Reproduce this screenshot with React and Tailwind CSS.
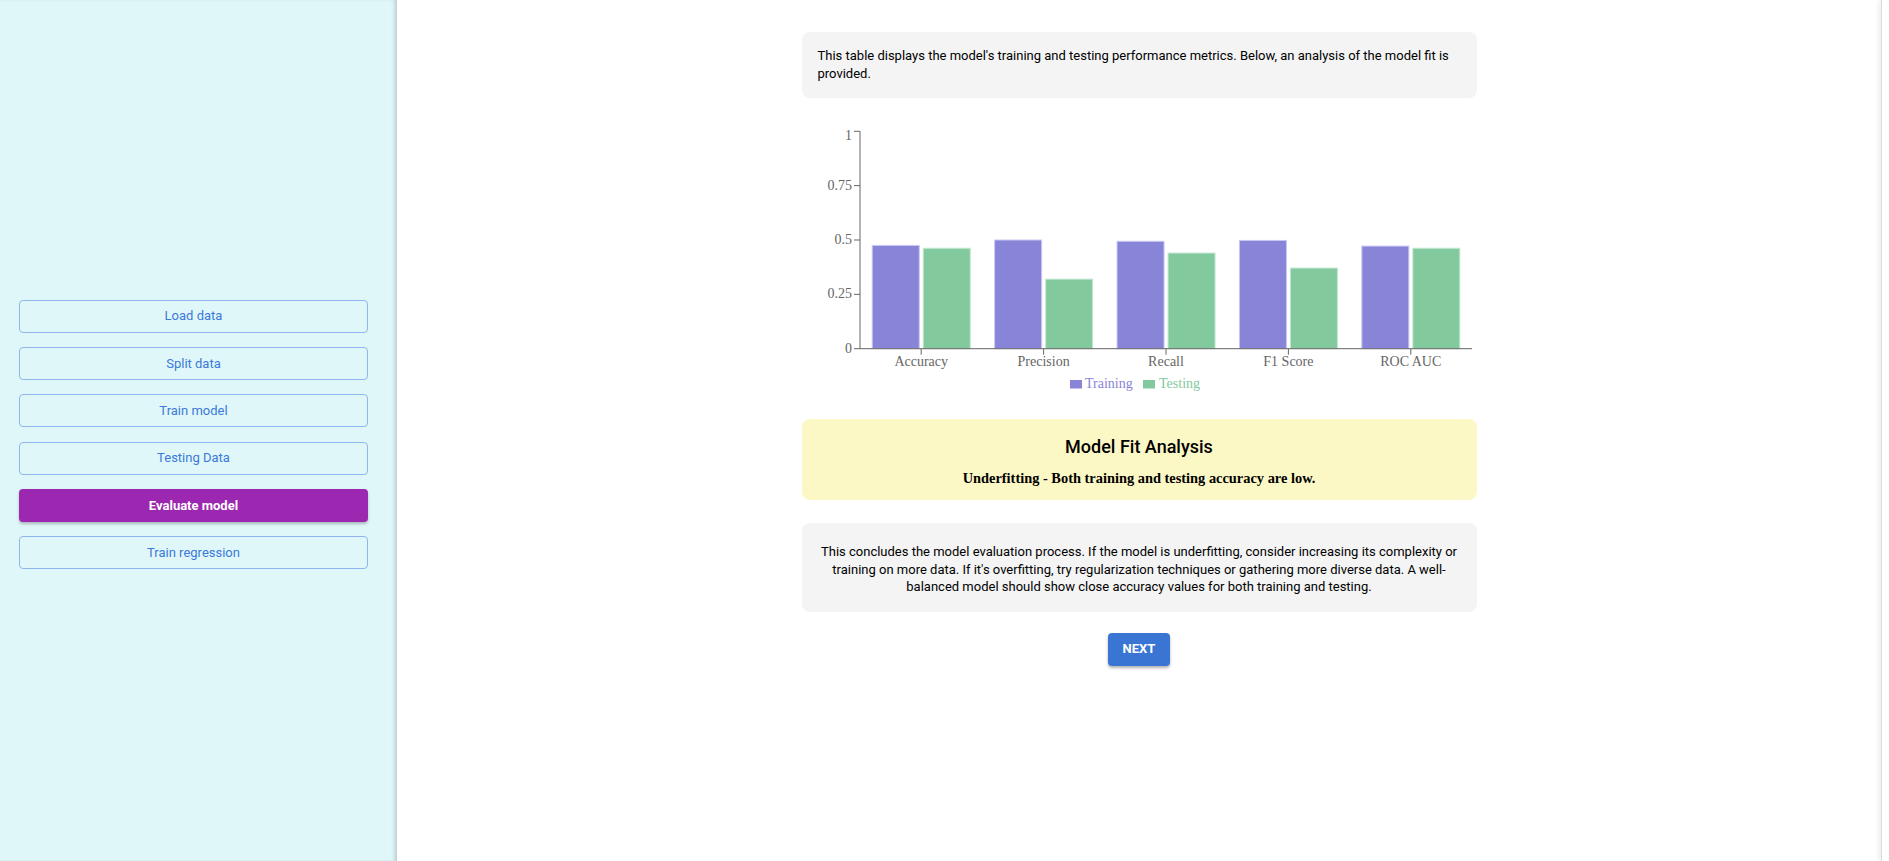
import React from 'react';

const steps = [
  { label: 'Load data' },
  { label: 'Split data' },
  { label: 'Train model' },
  { label: 'Testing Data' },
  { label: 'Evaluate model', active: true },
  { label: 'Train regression' },
];

const metrics = [
  { name: 'Accuracy', train: 0.475, test: 0.462 },
  { name: 'Precision', train: 0.5, test: 0.32 },
  { name: 'Recall', train: 0.494, test: 0.44 },
  { name: 'F1 Score', train: 0.498, test: 0.371 },
  { name: 'ROC AUC', train: 0.472, test: 0.462 },
];

// chart geometry (svg coords)
const AXIS_X = 58;
const AXIS_END = 670;
const Y_TOP = 20.3;
const Y_ZERO = 237.7;
const CAT_W = (AXIS_END - AXIS_X) / metrics.length;
const BAR_W = 47;
const yOf = (v) => Y_ZERO - v * (Y_ZERO - Y_TOP);

function MetricsChart() {
  const serif = { fontFamily: '"Liberation Serif", "Times New Roman", serif' };
  return (
    <svg width="675" height="290" className="block mt-[13px]" style={serif}>
      {/* bars */}
      {metrics.map((m, i) => {
        const start = AXIS_X + i * CAT_W;
        return (
          <g key={m.name}>
            <rect
              x={start + 12.24}
              y={yOf(m.train)}
              width={BAR_W}
              height={Y_ZERO - yOf(m.train)}
              fill="#8884d8"
              stroke="#c9c6f2"
              strokeWidth="1"
            />
            <rect
              x={start + 12.24 + BAR_W + 4}
              y={yOf(m.test)}
              width={BAR_W}
              height={Y_ZERO - yOf(m.test)}
              fill="#82ca9d"
              stroke="#c3e8d1"
              strokeWidth="1"
            />
          </g>
        );
      })}

      {/* y axis */}
      <line x1={AXIS_X} y1={Y_TOP} x2={AXIS_X} y2={Y_ZERO} stroke="#666" />
      {[0, 0.25, 0.5, 0.75, 1].map((t) => (
        <g key={t}>
          <line x1={AXIS_X - 6} y1={yOf(t)} x2={AXIS_X} y2={yOf(t)} stroke="#666" />
          <text
            x={AXIS_X - 8}
            y={yOf(t) - 1 + (t === 1 ? 5 : 0)}
            dy="0.355em"
            textAnchor="end"
            fontSize="14"
            fill="#666"
          >
            {t}
          </text>
        </g>
      ))}

      {/* x axis */}
      <line x1={AXIS_X} y1={Y_ZERO} x2={AXIS_END} y2={Y_ZERO} stroke="#666" />
      {metrics.map((m, i) => {
        const cx = AXIS_X + i * CAT_W + CAT_W / 2;
        return (
          <g key={m.name}>
            <line x1={cx} y1={Y_ZERO} x2={cx} y2={Y_ZERO + 6} stroke="#666" />
            <text x={cx} y={Y_ZERO + 7} dy="0.71em" textAnchor="middle" fontSize="14" fill="#666">
              {m.name}
            </text>
          </g>
        );
      })}

      {/* legend */}
      <rect x="268" y="269" width="12" height="8.5" fill="#8884d8" />
      <text x="283" y="272.5" dy="0.355em" fontSize="14" fill="#8884d8">Training</text>
      <rect x="341" y="269" width="12" height="8.5" fill="#82ca9d" />
      <text x="357" y="272.5" dy="0.355em" fontSize="14" fill="#82ca9d">Testing</text>
    </svg>
  );
}

export default function App() {
  return (
    <div className="flex h-[861px] w-full bg-white font-['Roboto',sans-serif] text-black overflow-hidden">
      {/* Sidebar */}
      <aside className="w-[397px] shrink-0 bg-[#e0f7fa] flex flex-col justify-center pt-2 pl-[19px] shadow-[inset_-4px_0_4px_-2px_rgba(0,0,0,0.18)]">
        <div className="flex flex-col gap-[14.4px] w-[349px]">
          {steps.map((s) =>
            s.active ? (
              <button
                key={s.label}
                className="h-[33px] rounded-[4px] bg-[#9c27b0] text-white text-[13px] font-bold shadow-[0_2px_3px_rgba(0,0,0,0.25)]"
              >
                {s.label}
              </button>
            ) : (
              <button
                key={s.label}
                className="h-[33px] rounded-[4px] border border-[#8fb6ef] text-[#3c79d8] text-[13px]"
              >
                {s.label}
              </button>
            )
          )}
        </div>
      </aside>

      {/* Main */}
      <main className="flex-1 flex justify-center pt-[32px]">
        <div className="w-[675px] flex flex-col">
          <div className="bg-[#f4f4f4] rounded-lg px-4 py-[15px] text-[13px] leading-[18px]">
            This table displays the model's training and testing performance metrics. Below, an analysis of the model fit is provided.
          </div>

          <MetricsChart />

          {/* Model fit analysis */}
          <div className="mt-[18px] bg-[#fcf8c6] rounded-lg pt-[16px] pb-[12px] px-4 text-center">
            <h3 className="text-[18px] leading-[24px] font-medium">Model Fit Analysis</h3>
            <p className="mt-[9px] text-[14.4px] leading-[20px] font-bold font-['Liberation_Serif',serif]">
              Underfitting - Both training and testing accuracy are low.
            </p>
          </div>

          {/* Conclusion */}
          <div className="mt-[23px] bg-[#f4f4f4] rounded-lg pt-[20px] pb-[16px] px-4 text-center text-[13px] leading-[17.5px]">
            This concludes the model evaluation process. If the model is underfitting, consider increasing its complexity or training on more data. If it's overfitting, try regularization techniques or gathering more diverse data. A well-balanced model should show close accuracy values for both training and testing.
          </div>

          <div className="mt-[21px] flex justify-center">
            <button className="h-[33px] px-[15px] rounded-[4px] bg-[#3a75d3] text-white text-[13px] font-bold shadow-[0_2px_3px_rgba(0,0,0,0.3)]">
              NEXT
            </button>
          </div>
        </div>
      </main>

      {/* right edge */}
      <div className="w-[8px] shrink-0 border-l border-[#dcdcdc] shadow-[-3px_0_4px_rgba(0,0,0,0.06)]" />
    </div>
  );
}
